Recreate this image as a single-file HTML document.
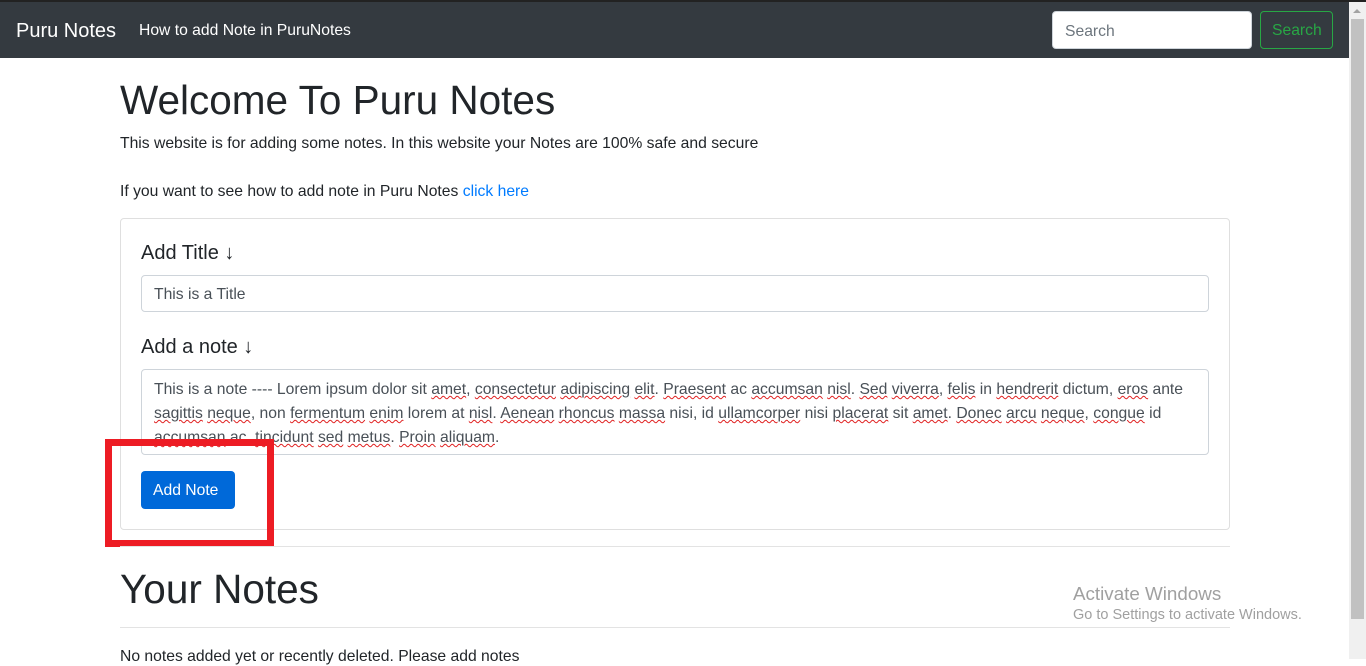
<!DOCTYPE html>
<html><head><meta charset="utf-8"><style>
*{box-sizing:border-box;margin:0;padding:0}
body{width:1366px;height:659px;overflow:hidden;background:#fff;font-family:"Liberation Sans",sans-serif;color:#212529;position:relative}
.top{position:absolute;left:0;top:0;width:1366px;height:2px;background:#222}
.nav{position:absolute;left:0;top:2px;width:1349px;height:56px;background:#343a40}
.brand{position:absolute;left:16px;top:18px;color:#fff;font-size:20px}
.link{position:absolute;left:139px;top:20px;color:#fff;font-size:15.7px}
.sin{position:absolute;left:1052px;top:9px;width:200px;height:38px;background:#fff;border:1px solid #ced4da;border-radius:4px;color:#6c757d;font-size:15.7px;padding:11px 12px}
.sbt{position:absolute;left:1260px;top:9px;width:73px;height:38px;border:1px solid #28a745;border-radius:4px;color:#28a745;font-size:15.7px;padding:10px 11px}
.sb{position:absolute;left:1349px;top:2px;width:17px;height:657px;background:#f0f0f0}
.thumb{position:absolute;left:1351px;top:19px;width:13px;height:600px;background:#c1c1c1}
.arrow{position:absolute;left:1353px;top:9px;width:0;height:0;border-left:4px solid transparent;border-right:4px solid transparent;border-bottom:4px solid #a3a3a3}
.a{position:absolute;white-space:nowrap}
h1{position:absolute;left:120px;font-weight:normal;font-size:40.5px;white-space:nowrap}
.p{font-size:15.7px}
.card{position:absolute;left:120px;top:218px;width:1110px;height:312px;border:1px solid #dfdfdf;border-radius:4px}
.lbl{font-size:20px}
.in{position:absolute;left:141px;width:1068px;border:1px solid #ced4da;border-radius:4px;font-size:15.7px;color:#495057;padding:0 12px}
.w{text-decoration:underline wavy #e02020;text-decoration-thickness:1px}
.btn{position:absolute;left:141px;top:471px;width:94px;height:38px;background:#0069d9;border-radius:4px;color:#fff;font-size:15.7px;padding:11px 12px}
.red{position:absolute;left:105px;top:439px;width:169px;height:108px;border:7px solid #ed1c24}
.hr{position:absolute;left:120px;width:1110px;height:1px;background:#e3e3e3}
</style></head><body>
<div class="top"></div>
<div class="nav"><div class="brand">Puru Notes</div><div class="link">How to add Note in PuruNotes</div>
<div class="sin">Search</div><div class="sbt">Search</div></div>
<div class="sb"></div><div class="thumb"></div><div class="arrow"></div>
<h1 style="top:77px">Welcome To Puru Notes</h1>
<div class="a p" style="left:120px;top:135px">This website is for adding some notes. In this website your Notes are 100% safe and secure</div>
<div class="a p" style="left:120px;top:183px">If you want to see how to add note in Puru Notes <span style="color:#007bff">click here</span></div>
<div class="card"></div>
<div class="a lbl" style="left:141px;top:242px">Add Title ↓</div>
<div class="in" style="top:275px;height:37px;padding-top:10px">This is a Title</div>
<div class="a lbl" style="left:141px;top:336px">Add a note ↓</div>
<div class="in" style="top:369px;height:86px;padding-top:8px;line-height:24px;white-space:nowrap;overflow:hidden">This is a note ---- Lorem ipsum dolor sit <span class="w">amet</span>, <span class="w">consectetur</span> <span class="w">adipiscing</span> <span class="w">elit</span>. <span class="w">Praesent</span> ac <span class="w">accumsan</span> <span class="w">nisl</span>. <span class="w">Sed</span> <span class="w">viverra</span>, <span class="w">felis</span> in <span class="w">hendrerit</span> dictum, <span class="w">eros</span> ante<br><span class="w">sagittis</span> <span class="w">neque</span>, non <span class="w">fermentum</span> <span class="w">enim</span> lorem at <span class="w">nisl</span>. <span class="w">Aenean</span> <span class="w">rhoncus</span> <span class="w">massa</span> nisi, id <span class="w">ullamcorper</span> nisi <span class="w">placerat</span> sit <span class="w">amet</span>. <span class="w">Donec</span> <span class="w">arcu</span> <span class="w">neque</span>, <span class="w">congue</span> id<br><span class="w">accumsan</span> ac, <span class="w">tincidunt</span> <span class="w">sed</span> <span class="w">metus</span>. <span class="w">Proin</span> <span class="w">aliquam</span>.</div>
<div class="btn">Add Note</div>
<div class="red"></div>
<div class="hr" style="top:546px"></div>
<h1 style="top:566px">Your Notes</h1>
<div class="hr" style="top:627px"></div>
<div class="a p" style="left:120px;top:648px">No notes added yet or recently deleted. Please add notes</div>
<div class="a" style="left:1073px;top:583px;font-size:18.8px;color:#a0a0a0">Activate Windows</div>
<div class="a" style="left:1073px;top:607px;font-size:14.5px;color:#a0a0a0">Go to Settings to activate Windows.</div>
</body></html>
